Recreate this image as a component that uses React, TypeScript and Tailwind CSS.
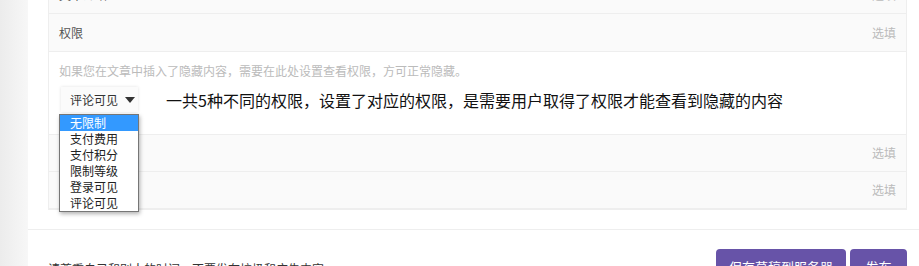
import React from "react";

const font = { fontFamily: '"Microsoft YaHei", "Noto Sans CJK SC", "Noto Sans", sans-serif' };

const options = ["无限制", "支付费用", "支付积分", "限制等级", "登录可见", "评论可见"];

function FieldRow({ label, h }: { label: string; h: string }) {
  return (
    <div className={`flex ${h} items-center justify-between border-b border-[#eeeeee] bg-[#fafafa] px-[10px]`}>
      <span className="text-[12px] text-[#555]">{label}</span>
      <span className="text-[12px] text-[#bbb]">选填</span>
    </div>
  );
}

export default function App() {
  return (
    <div className="flex h-[266px] w-[919px] overflow-hidden bg-white" style={font}>
      {/* left shadow strip */}
      <div className="w-[28px] shrink-0 bg-gradient-to-r from-[#ececec] to-[#f7f7f7]" />

      <div className="flex flex-1 flex-col bg-white">
        <div className="pl-[20px] pr-[12px]">
          <div className="-mt-[24px] border-x border-b border-[#eeeeee]">
            <FieldRow label="文章介绍" h="h-[38px]" />
            <FieldRow label="权限" h="h-[38px]" />

            <div className="relative h-[83px] border-b border-[#eeeeee] bg-white px-[10px] pt-[10px]">
              <p className="text-[12px] leading-[18px] text-[#bbb]">
                如果您在文章中插入了隐藏内容，需要在此处设置查看权限，方可正常隐藏。
              </p>
              <div className="mt-[7px] flex items-center">
                <div className="ml-[2px] flex h-[25px] w-[77px] items-center gap-[7px] bg-[#fbfbfb] pl-[9px] shadow-[0_0_3px_rgba(0,0,0,0.12)]">
                  <span className="text-[12px] text-[#333]">评论可见</span>
                  <svg width="10" height="6" viewBox="0 0 10 6">
                    <path d="M0 0 L10 0 L5 6 Z" fill="#333" />
                  </svg>
                </div>
                <span className="ml-[28px] text-[16px] text-[#111]">
                  一共5种不同的权限，设置了对应的权限，是需要用户取得了权限才能查看到隐藏的内容
                </span>
              </div>

              {/* open native-like dropdown */}
              <div className="absolute left-[10px] top-[62px] z-10 w-[80px] border border-[#767676] bg-white shadow-[1px_2px_4px_rgba(0,0,0,0.3)]">
                {options.map((o, i) => (
                  <div
                    key={o}
                    className={`h-[16px] pl-[10px] text-[12px] leading-[16px] ${
                      i === 0 ? "bg-[#3399ff] text-white" : "text-[#222]"
                    }`}
                  >
                    {o}
                  </div>
                ))}
              </div>
            </div>

            <FieldRow label="" h="h-[37px]" />
            <FieldRow label="" h="h-[37px]" />
          </div>
        </div>

        <div className="mt-[19px] border-t border-[#eeeeee]" />

        <div className="flex items-start pl-[20px] pr-[12px] pt-[19px]">
          <span className="mt-[11px] text-[12px] text-[#333]">
            请尊重自己和别人的时间，不要发布垃圾和广告内容。
          </span>
          <div className="ml-auto flex gap-[4px]">
            <button className="h-[36px] w-[130px] rounded-[4px] bg-[#6753a8] text-[13px] text-white">
              保存草稿到服务器
            </button>
            <button className="h-[36px] w-[57px] rounded-[4px] bg-[#6753a8] text-[13px] text-white">
              发布
            </button>
          </div>
        </div>
      </div>
    </div>
  );
}
